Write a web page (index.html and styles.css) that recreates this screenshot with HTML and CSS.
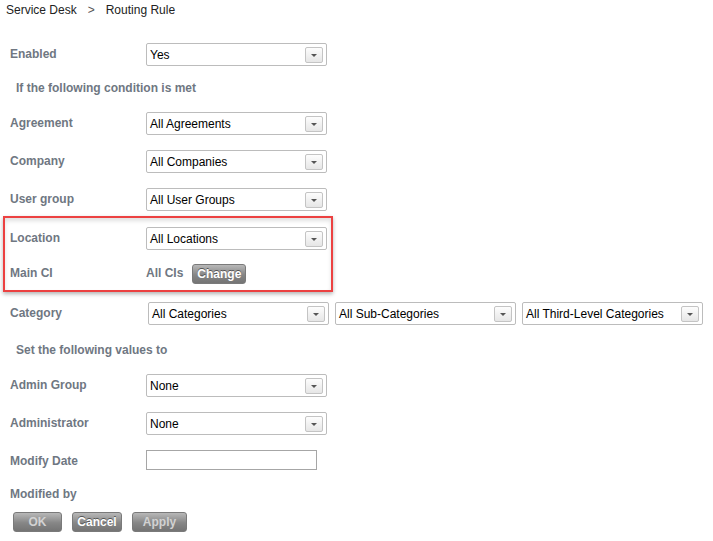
FILE: index.html
```html
<!DOCTYPE html>
<html lang="en">
<head>
  <meta charset="UTF-8" />
  <title>Routing Rule</title>
  <link rel="stylesheet" href="styles.css">
</head>
<body>
  <div class="breadcrumb">
    <span>Service Desk</span><span class="sep">&gt;</span><span>Routing Rule</span>
  </div>

  <div class="form">
    <div class="row first">
      <div class="label">Enabled</div>
      <div class="combo"><span>Yes</span><span class="arrow"></span></div>
    </div>

    <div class="heading">If the following condition is met</div>

    <div class="row">
      <div class="label">Agreement</div>
      <div class="combo"><span>All Agreements</span><span class="arrow"></span></div>
    </div>
    <div class="row">
      <div class="label">Company</div>
      <div class="combo"><span>All Companies</span><span class="arrow"></span></div>
    </div>
    <div class="row">
      <div class="label">User group</div>
      <div class="combo"><span>All User Groups</span><span class="arrow"></span></div>
    </div>

    <div class="highlight">
      <div class="row">
        <div class="label">Location</div>
        <div class="combo"><span>All Locations</span><span class="arrow"></span></div>
      </div>
      <div class="row last">
        <div class="label">Main CI</div>
        <div class="value">All CIs</div>
        <button class="btn change">Change</button>
      </div>
    </div>

    <div class="row category">
      <div class="label">Category</div>
      <div class="combo"><span>All Categories</span><span class="arrow"></span></div>
      <div class="combo"><span>All Sub-Categories</span><span class="arrow"></span></div>
      <div class="combo"><span>All Third-Level Categories</span><span class="arrow"></span></div>
    </div>

    <div class="heading">Set the following values to</div>

    <div class="row">
      <div class="label">Admin Group</div>
      <div class="combo"><span>None</span><span class="arrow"></span></div>
    </div>
    <div class="row">
      <div class="label">Administrator</div>
      <div class="combo"><span>None</span><span class="arrow"></span></div>
    </div>
    <div class="row date">
      <div class="label">Modify Date</div>
      <input type="text" class="text-input">
    </div>
    <div class="row">
      <div class="label">Modified by</div>
    </div>

    <div class="actions">
      <button class="btn disabled ok">OK</button>
      <button class="btn cancel">Cancel</button>
      <button class="btn disabled apply">Apply</button>
    </div>
  </div>
</body>
</html>
```

FILE: styles.css
```css
body {
  margin: 0;
  font-family: "Liberation Sans", Arial, sans-serif;
  font-size: 12px;
  color: #000;
  background: #fff;
}

.breadcrumb {
  height: 20px;
  line-height: 20px;
  padding-left: 6px;
  color: #222;
}

.breadcrumb .sep {
  margin: 0 11px;
  color: #555;
}

.form {
  padding-top: 23px;
}

.row {
  display: flex;
  align-items: center;
  height: 23px;
  padding-left: 10px;
  margin-bottom: 15px;
}

.label {
  width: 136px;
  flex-shrink: 0;
  font-weight: bold;
  color: #6f7782;
  padding-bottom: 2px;
}

.heading {
  font-weight: bold;
  color: #6f7782;
  padding-left: 16px;
  height: 16px;
  line-height: 16px;
  margin: -1px 0 16px;
}

.combo {
  box-sizing: border-box;
  width: 181px;
  flex-shrink: 0;
  height: 23px;
  border: 1px solid #bcbcbc;
  border-radius: 2px;
  display: flex;
  align-items: center;
  justify-content: space-between;
  padding: 0 3px 0 3px;
  background: #fff;
}

.combo .arrow {
  box-sizing: border-box;
  width: 18px;
  height: 16px;
  border: 1px solid #c4c4c4;
  border-radius: 2px;
  background: linear-gradient(#fdfdfd, #e6e6e6);
  position: relative;
}

.combo .arrow::after {
  content: "";
  position: absolute;
  left: 5px;
  top: 6px;
  border-left: 3px solid transparent;
  border-right: 3px solid transparent;
  border-top: 3px solid #555;
}

.highlight {
  box-sizing: border-box;
  width: 330px;
  margin: -10px 0 10px 3px;
  padding: 9px 0 5px;
  border: 2px solid #ec4141;
  box-shadow: 0 2px 4px rgba(0, 0, 0, 0.3), inset 0 3px 4px rgba(0, 0, 0, 0.12);
}

.highlight .row {
  padding-left: 5px;
}

.highlight .row.last {
  margin-bottom: 0;
  margin-top: -3px;
}

.value {
  font-weight: bold;
  color: #6f7782;
  margin-right: 9px;
  padding-bottom: 1px;
}

.category {
  gap: 6px;
  margin-bottom: 18px;
}

.category .label {
  width: 132px;
}

.row.date {
  margin-bottom: 10px;
}

.text-input {
  box-sizing: border-box;
  align-self: flex-start;
  width: 171px;
  height: 20px;
  border: 1px solid #a6a6a6;
  margin: 0;
  padding: 0;
}

.btn {
  font-family: "Liberation Sans", Arial, sans-serif;
  font-size: 12px;
  font-weight: bold;
  color: #fff;
  text-shadow: 0 -1px 0 #555;
  background: linear-gradient(#b8b8b8, #868686 55%, #747474);
  border: 1px solid #7a7a7a;
  border-radius: 3px;
  height: 20px;
  padding: 0;
  cursor: pointer;
}

.btn.change {
  width: 54px;
}

.btn.disabled {
  color: #d2d2d2;
  text-shadow: none;
}

.actions {
  display: flex;
  gap: 10px;
  padding-left: 13px;
  margin-top: -9px;
}

.actions .ok {
  width: 49px;
}

.actions .cancel {
  width: 50px;
}

.actions .apply {
  width: 55px;
}
```
